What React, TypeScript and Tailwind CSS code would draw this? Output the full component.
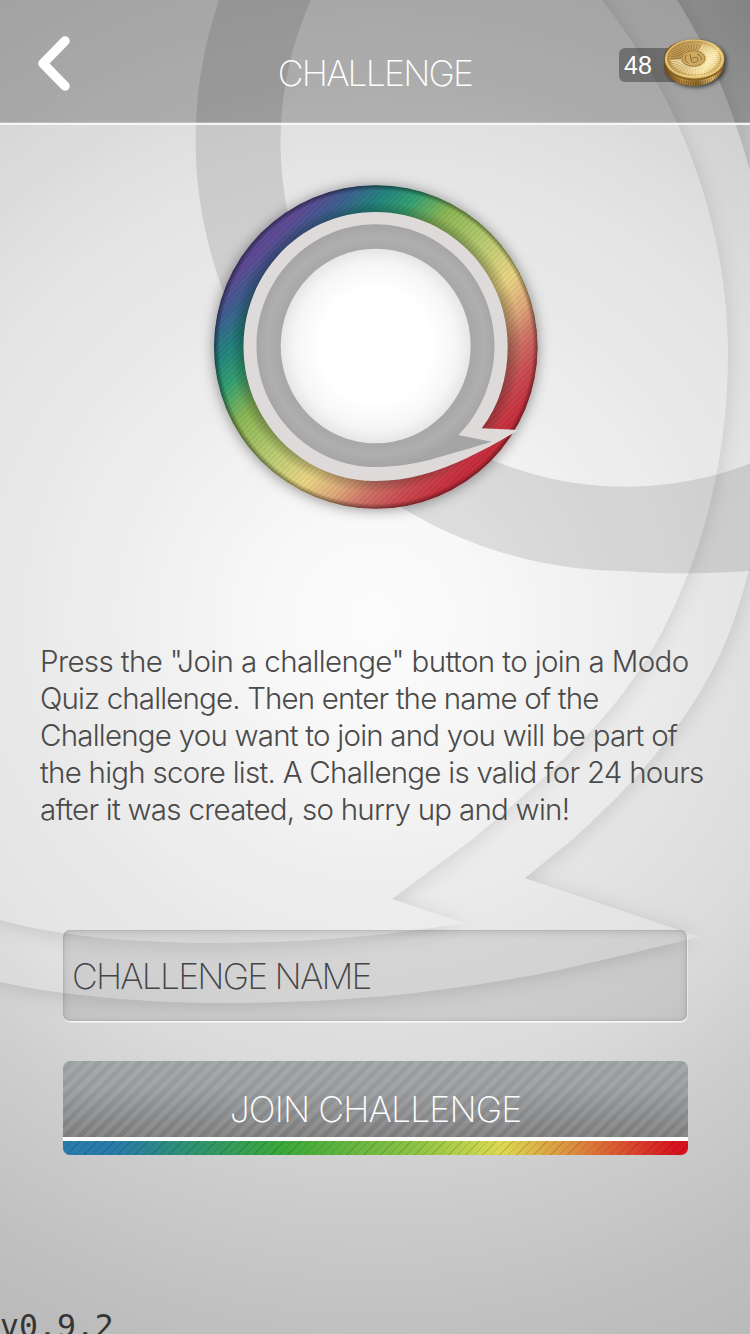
const OUTER_SHAPE =
  'M677 0C735 90 775 225 775 355C775 440 765 530 734 620C706 700 652 768 572 840L525 878L679 930L700 937C610 958 555 972 523 977C425 995 330 1003 230 1003C140 1003 65 996 0 982L-60 960V-60H640Z';
const INNER_SHAPE =
  'M602 0C685 105 728 230 728 355C728 455 704 550 664 628C620 714 560 765 473 839L392 899L464 923C380 937 300 943 215 943C140 943 60 937 0 920L-60 895V-60H555Z';
const FRAME = 'M-200 -200H950V1534H-200Z';

function Backdrop() {
  return (
    <svg className="absolute inset-0 h-full w-full" viewBox="0 0 750 1334" aria-hidden="true">
      <defs>
        <radialGradient id="base" gradientUnits="userSpaceOnUse" cx="375" cy="620" r="830">
          <stop offset="0" stopColor="#fcfcfc" />
          <stop offset="0.12" stopColor="#f7f7f7" />
          <stop offset="0.26" stopColor="#ececec" />
          <stop offset="0.42" stopColor="#e2e2e2" />
          <stop offset="0.55" stopColor="#dbdbdb" />
          <stop offset="0.68" stopColor="#cecece" />
          <stop offset="0.86" stopColor="#c0c0c0" />
          <stop offset="1" stopColor="#b8b8b8" />
        </radialGradient>
        <radialGradient id="corner" gradientUnits="userSpaceOnUse" cx="790" cy="0" r="210">
          <stop offset="0" stopColor="#3c4242" stopOpacity="0.22" />
          <stop offset="1" stopColor="#3c4242" stopOpacity="0" />
        </radialGradient>
        <clipPath id="outsideOuter">
          <path clipRule="evenodd" d={FRAME + OUTER_SHAPE} />
        </clipPath>
        <clipPath id="outsideInner">
          <path clipRule="evenodd" d={FRAME + INNER_SHAPE} />
        </clipPath>
        <clipPath id="insideOuter">
          <path d={OUTER_SHAPE} />
        </clipPath>
        <filter id="soft" x="-20%" y="-20%" width="140%" height="140%">
          <feGaussianBlur stdDeviation="10" />
        </filter>
      </defs>
      <rect width="750" height="1334" fill="url(#base)" />
      <g clipPath="url(#outsideOuter)">
        <path d={OUTER_SHAPE} fill="#000" fillOpacity="0.13" filter="url(#soft)" transform="translate(1 3)" />
        <rect x="550" width="200" height="220" fill="url(#corner)" />
      </g>
      <path d={OUTER_SHAPE} fill="#fff" fillOpacity="0.16" />
      <g clipPath="url(#insideOuter)">
        <g clipPath="url(#outsideInner)">
          <path d={INNER_SHAPE} fill="#000" fillOpacity="0.12" filter="url(#soft)" transform="translate(1 3)" />
        </g>
      </g>
      <path d={INNER_SHAPE} fill="#fff" fillOpacity="0.14" />
      <path
        d="M219 0A431 431 0 0 0 626 571C670 575 720 573 750 571V463.5A345 345 0 0 1 311 0Z"
        fill="#000"
        fillOpacity="0.105"
      />
    </svg>
  );
}

function Coin() {
  const rays = Array.from({ length: 44 }, (_, i) => (i * Math.PI * 2) / 44);
  return (
    <svg className="block h-[58px] w-[72px]" viewBox="658 34 72 58" aria-hidden="true">
      <defs>
        <linearGradient id="coinSide" x1="0" x2="1" y1="0" y2="0">
          <stop offset="0" stopColor="#6b4a1a" />
          <stop offset="0.3" stopColor="#b98c3f" />
          <stop offset="0.55" stopColor="#8d682b" />
          <stop offset="0.8" stopColor="#e3c171" />
          <stop offset="1" stopColor="#7a5620" />
        </linearGradient>
        <linearGradient id="coinFace" x1="0" x2="1" y1="0.3" y2="0.75">
          <stop offset="0" stopColor="#b8914d" />
          <stop offset="0.4" stopColor="#cfad67" />
          <stop offset="0.75" stopColor="#f8e19a" />
          <stop offset="1" stopColor="#d2ab5e" />
        </linearGradient>
        <filter id="coinShadow" x="-20%" y="-20%" width="150%" height="150%">
          <feDropShadow dx="2" dy="2" stdDeviation="2" floodColor="#000" floodOpacity="0.6" />
        </filter>
      </defs>
      <g filter="url(#coinShadow)">
        <path d="M664.5 57C664.5 46 678 39.5 694 39.5S724.5 47 724.5 58L723.5 67C721 78 708 85.500 694 85.500C678 85.500 664 77 664 66Z" fill="url(#coinSide)" />
      </g>
      <path d="M666 71C671 80 682 84 694 84S718 79 723 70" fill="none" stroke="#5d3f14" strokeOpacity="0.5" strokeWidth="4.500" strokeDasharray="1 1.4" />
      <ellipse cx="694.500" cy="60.500" rx="29.800" ry="20" fill="#8a6425" />
      <ellipse cx="694.500" cy="59" rx="29.600" ry="19.500" fill="#e6c878" />
      <ellipse cx="694.500" cy="58.500" rx="27.800" ry="18" fill="url(#coinFace)" />
      <ellipse cx="694.500" cy="58.500" rx="26" ry="16.600" fill="none" stroke="#7c5a20" strokeOpacity="0.7" strokeWidth="1" strokeDasharray="1 1.300" />
      {rays.map((a) => (
        <line
          key={a}
          x1={694 + Math.cos(a) * 13}
          y1={58.5 + Math.sin(a) * 8.5}
          x2={694 + Math.cos(a) * 23.5}
          y2={58.5 + Math.sin(a) * 15}
          stroke={a > 3 && a < 5 ? '#8d6a2e' : '#fffbe0'}
          strokeOpacity="0.75"
          strokeWidth="0.9"
        />
      ))}
      <ellipse cx="693.500" cy="58.500" rx="11.500" ry="7.800" fill="#cdab63" stroke="#a07b3a" strokeWidth="1" />
      <path d="M690 54L691.500 61.500C693.500 63.500 698.500 62 698 59C697.500 56.500 693.500 57 692 59M687 54.500C684 57.500 685 61.500 688.500 63M697 54C700 55 702.500 57.500 701 60.500" fill="none" stroke="#8a662b" strokeWidth="1" />
    </svg>
  );
}

function Logo() {
  return (
    <svg className="block h-[364px] w-[364px]" viewBox="194 165 364 364" role="img" aria-label="Modo Quiz">
      <defs>
        <linearGradient id="spectrum" gradientUnits="userSpaceOnUse" x1="261.500" y1="232.500" x2="490.500" y2="461.500">
          <stop offset="0.04" stopColor="#5c4c94" />
          <stop offset="0.1" stopColor="#3f5f91" />
          <stop offset="0.18" stopColor="#24847f" />
          <stop offset="0.26" stopColor="#35a072" />
          <stop offset="0.36" stopColor="#8cb656" />
          <stop offset="0.5" stopColor="#b6cb70" />
          <stop offset="0.64" stopColor="#e9d584" />
          <stop offset="0.73" stopColor="#dfaa7b" />
          <stop offset="0.8" stopColor="#cf7668" />
          <stop offset="0.88" stopColor="#ca4d52" />
          <stop offset="0.96" stopColor="#c62f3e" />
        </linearGradient>
        <radialGradient id="rim" gradientUnits="userSpaceOnUse" cx="376" cy="347" r="162">
          <stop offset="0.81" stopColor="#000" stopOpacity="0.3" />
          <stop offset="0.9" stopColor="#000" stopOpacity="0" />
          <stop offset="0.965" stopColor="#000" stopOpacity="0" />
          <stop offset="1" stopColor="#000" stopOpacity="0.45" />
        </radialGradient>
        <radialGradient id="core">
          <stop offset="0.58" stopColor="#fff" />
          <stop offset="0.85" stopColor="#f6f6f6" />
          <stop offset="1" stopColor="#e6e6e6" />
        </radialGradient>
        <radialGradient id="band" gradientUnits="userSpaceOnUse" cx="376" cy="346" r="121">
          <stop offset="0.78" stopColor="#a6a6a6" />
          <stop offset="0.9" stopColor="#afafaf" />
          <stop offset="1" stopColor="#a5a5a5" />
        </radialGradient>
        <pattern id="hatch" width="4" height="4" patternUnits="userSpaceOnUse" patternTransform="rotate(45)">
          <rect width="1" height="4" fill="#000" fillOpacity="0.09" />
        </pattern>
        <filter id="glow" x="-15%" y="-15%" width="130%" height="130%">
          <feDropShadow dx="0" dy="1" stdDeviation="7" floodColor="#000" floodOpacity="0.42" />
        </filter>
      </defs>
      <circle cx="375.800" cy="347" r="161.800" fill="url(#spectrum)" filter="url(#glow)" />
      <circle cx="375.800" cy="347" r="161.800" fill="url(#hatch)" />
      <circle cx="375.800" cy="347" r="161.800" fill="url(#rim)" />
      <path
        d="M375.600 212C449 212 507.700 272 507.700 346.500C507.700 378 499 406 481.700 428.300L518.500 430C502 440 486 449 467 458C437 472 408 481 375.600 481C302 481 243.500 421 243.500 346.500S302 212 375.600 212Z"
        fill="#dedada"
      />
      <path
        d="M375.500 224.300C441 224.300 494.500 278.500 494.500 345.700C494.500 380 480 414 458.300 435L491.700 441.700C478 446 464 450 450 454C424 462 402 467 375.500 467C310 467 256.500 412.500 256.500 345.700S310 224.300 375.500 224.300Z"
        fill="url(#band)"
      />
      <ellipse cx="375.700" cy="346" rx="95" ry="97.300" fill="url(#core)" />
    </svg>
  );
}

const COPY = [
  { text: 'Press the "Join a challenge" button to join a Modo', tracking: 'tracking-[-0.62px]' },
  { text: 'Quiz challenge. Then enter the name of the', tracking: 'tracking-[-0.85px]' },
  { text: 'Challenge you want to join and you will be part of', tracking: 'tracking-[-0.78px]' },
  { text: 'the high score list. A Challenge is valid for 24 hours', tracking: 'tracking-[-0.75px]' },
  { text: 'after it was created, so hurry up and win!', tracking: 'tracking-[-0.74px]' },
];

export default function App() {
  return (
    <div className="relative h-[1334px] w-[750px] overflow-hidden bg-[#d8d8d8] font-['Inter','Liberation_Sans',sans-serif]">
      <Backdrop />
      <div className="relative flex h-full flex-col">
        <header className="flex h-[125px] shrink-0 items-start justify-between border-b-2 border-white/90 bg-black/22 shadow-[inset_0_-1px_0_rgba(255,255,255,0.25)]">
          <button aria-label="Back" className="w-[219px] pt-[33px] pl-[34px]">
            <svg className="block h-[60px] w-[40px]" viewBox="34 33 40 60" aria-hidden="true">
              <path d="M65 41L43 63.500L65 86" fill="none" stroke="#fff" strokeWidth="9.500" strokeLinecap="round" strokeLinejoin="round" />
            </svg>
          </button>
          <h1 className="pt-[54px] text-[35.500px] leading-[40px] font-extralight tracking-[-1.8px] text-white">CHALLENGE</h1>
          <div className="flex w-[219px] items-start justify-end pt-[34px] pr-[20px]">
            <div className="mt-[14px] -mr-[30px] h-[34px] w-[69px] rounded-[6px] bg-black/33 pl-[5px] font-['Liberation_Sans',sans-serif] text-[25px] leading-[34px] text-white">
              48
            </div>
            <div className="relative">
              <Coin />
            </div>
          </div>
        </header>

        <main className="flex flex-col">
          <div className="mt-[40px] ml-[194px]">
            <Logo />
          </div>
          <p className="mt-[114px] ml-[40px] flex flex-col items-start text-[29.500px] leading-[37px] font-light text-[#4a4a4a]">
            {COPY.map((line) => (
              <span key={line.text} className={`whitespace-nowrap ${line.tracking}`}>
                {line.text}
              </span>
            ))}
          </p>
          <input
            aria-label="Challenge name"
            placeholder="CHALLENGE NAME"
            className="mt-[102px] ml-[63px] h-[91px] w-[624px] rounded-[7px] bg-black/8 pt-[2px] pr-4 pl-[9px] text-[35.500px] font-extralight tracking-[-1.8px] text-[#444] shadow-[inset_0_2px_9px_rgba(0,0,0,0.14),inset_0_0_2px_rgba(0,0,0,0.2),0.5px_1.5px_0_rgba(255,255,255,0.85)] outline-none placeholder:text-[#444548] placeholder:opacity-100"
          />
          <button className="mt-[40px] ml-[63px] flex h-[94px] w-[625px] flex-col overflow-hidden rounded-[7px]">
            <span className="flex h-[76px] w-full items-start justify-center bg-[repeating-linear-gradient(135deg,rgba(255,255,255,0.1)_0px,rgba(255,255,255,0.1)_4.8px,transparent_4.8px,transparent_9.6px),linear-gradient(#9a9fa1,#979a9c_35%,#7b7b7c)] pt-[29px] text-[35.500px] leading-[40px] font-extralight tracking-[-0.85px] text-white">
              JOIN CHALLENGE
            </span>
            <span className="h-[4px] w-full bg-white" />
            <span className="h-[14px] w-full bg-[repeating-linear-gradient(135deg,rgba(0,0,0,0.13)_0px,rgba(0,0,0,0.13)_1px,transparent_1px,transparent_6px),linear-gradient(90deg,#2a7aab_0%,#2a7aab_8%,#2c8f7c_18%,#3aa83a_35%,#8fc445_57%,#dcda50_70%,#dc8a3e_82%,#d8121f_98%)]" />
          </button>
          <span className="mt-[153px] pl-0 font-['DejaVu_Sans_Mono',monospace] text-[31.500px] leading-[36px] whitespace-nowrap text-[#353535]">
            v0.9.2
          </span>
        </main>
      </div>
    </div>
  );
}
